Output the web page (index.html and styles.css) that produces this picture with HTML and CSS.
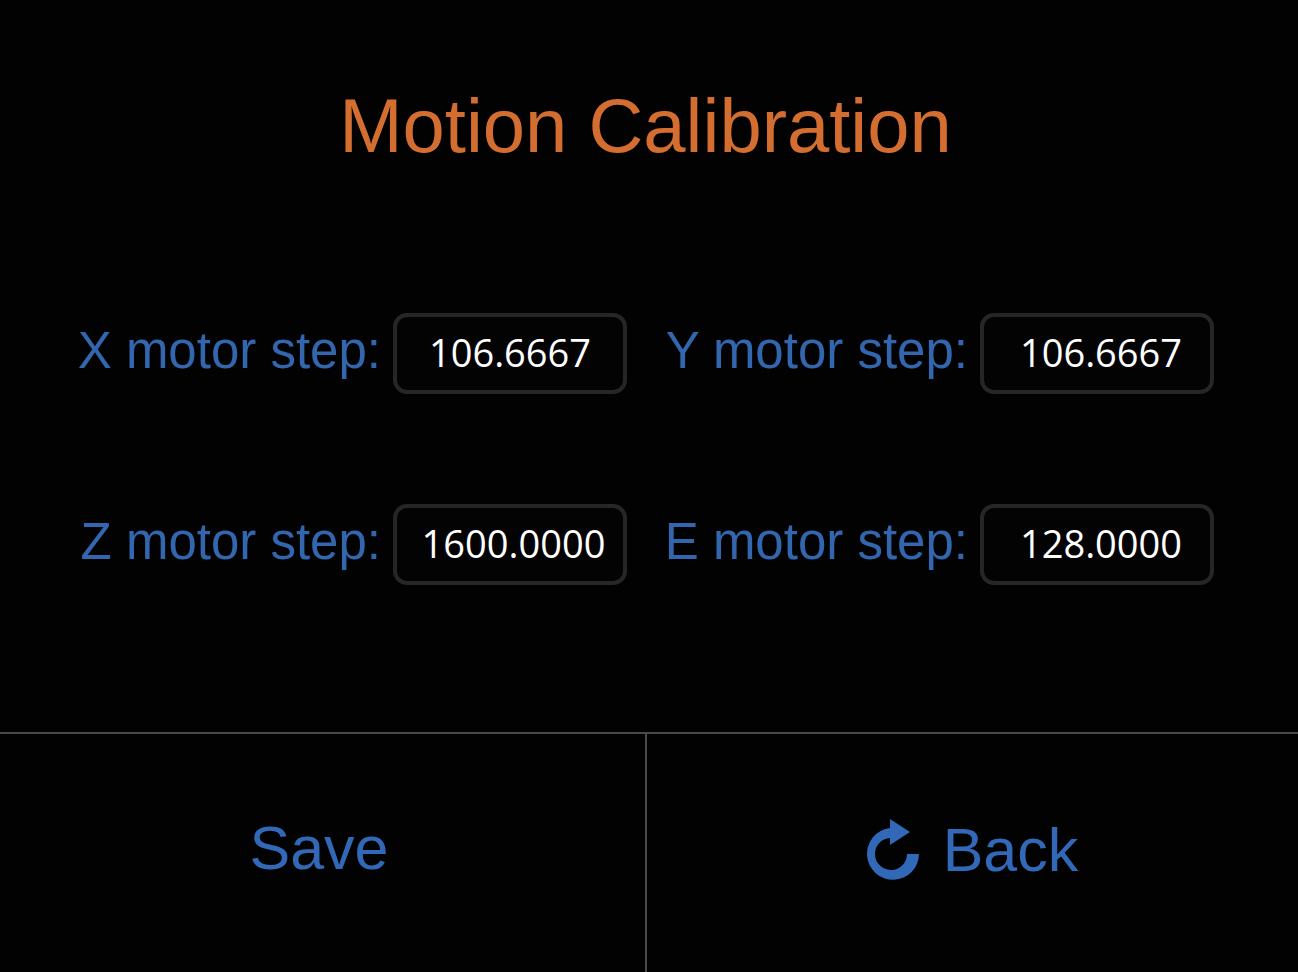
FILE: index.html
```html
<!DOCTYPE html>
<html lang="en">
<head>
  <meta charset="UTF-8">
  <meta name="viewport" content="width=device-width, initial-scale=1.0">
  <title>Motion Calibration</title>
  <link rel="stylesheet" href="styles.css">
</head>
<body>
  <div class="screen">
    <h1 class="title">Motion Calibration</h1>
    <form class="steps">
      <div class="step">
        <label class="step-label" for="xStep">X motor step:</label>
        <input class="step-input" type="text" id="xStep" value="106.6667">
      </div>
      <div class="step step-right">
        <label class="step-label" for="yStep">Y motor step:</label>
        <input class="step-input" type="text" id="yStep" value="106.6667">
      </div>
      <div class="step step-wide">
        <label class="step-label" for="zStep">Z motor step:</label>
        <input class="step-input" type="text" id="zStep" value="1600.0000">
      </div>
      <div class="step step-right">
        <label class="step-label" for="eStep">E motor step:</label>
        <input class="step-input" type="text" id="eStep" value="128.0000">
      </div>
    </form>
    <div class="actions">
      <button class="action action-save" type="button">Save</button>
      <button class="action action-back" type="button">
        <svg class="back-icon" viewBox="0 0 54 62" width="54" height="62" aria-hidden="true">
          <path fill="currentColor" d="M23 0 L43 13 L23 26 L23 19 A16 16 0 1 0 40 35 L52 35 A26 26 0 1 1 23 9 Z"/>
        </svg>
        <span>Back</span>
      </button>
    </div>
  </div>
</body>
</html>
```

FILE: styles.css
```css
html, body {
  margin: 0;
  padding: 0;
  background-color: #020202;
}
.screen {
  width: 1298px;
  height: 972px;
  display: flex;
  flex-direction: column;
  overflow: hidden;
  font-family: "Liberation Sans", Arial, sans-serif;
}
.title {
  margin: 0;
  padding: 85px 7px 0 0;
  height: 313px;
  box-sizing: border-box;
  line-height: 82px;
  font-size: 76px;
  font-weight: 400;
  text-align: center;
  color: #d46e30;
}
.steps {
  display: grid;
  grid-template-columns: 627px 587px;
  grid-auto-rows: 81px;
  row-gap: 110px;
  height: 419px;
}
.step {
  display: flex;
  align-items: center;
  justify-content: flex-end;
  gap: 12px;
}
.step-label {
  font-size: 51px;
  line-height: 76px;
  margin-top: -6px;
  color: #3266ae;
  white-space: nowrap;
}
.step-input {
  width: 234px;
  height: 81px;
  box-sizing: border-box;
  padding: 0 0 4px;
  background-color: #030303;
  border: 4px solid #262626;
  border-radius: 14px;
  color: #fff;
  font-family: "Open Sans", sans-serif;
  font-size: 38px;
  text-align: center;
  outline: none;
}
.step-right .step-input {
  padding-left: 8px;
}
.step-wide .step-input {
  padding-left: 7px;
}
.actions {
  flex: 1;
  display: grid;
  grid-template-columns: 647px 1fr;
  border-top: 2px solid #4a4a4a;
}
.action {
  display: flex;
  align-items: center;
  justify-content: center;
  gap: 22px;
  padding: 0;
  background: none;
  border: none;
  color: #3169b8;
  font-family: inherit;
  font-size: 61px;
}
.action-save {
  padding-right: 7px;
  padding-bottom: 11px;
  border-right: 2px solid #4a4a4a;
}
.action-back {
  padding-bottom: 7px;
}
.back-icon {
  flex: none;
}
```
